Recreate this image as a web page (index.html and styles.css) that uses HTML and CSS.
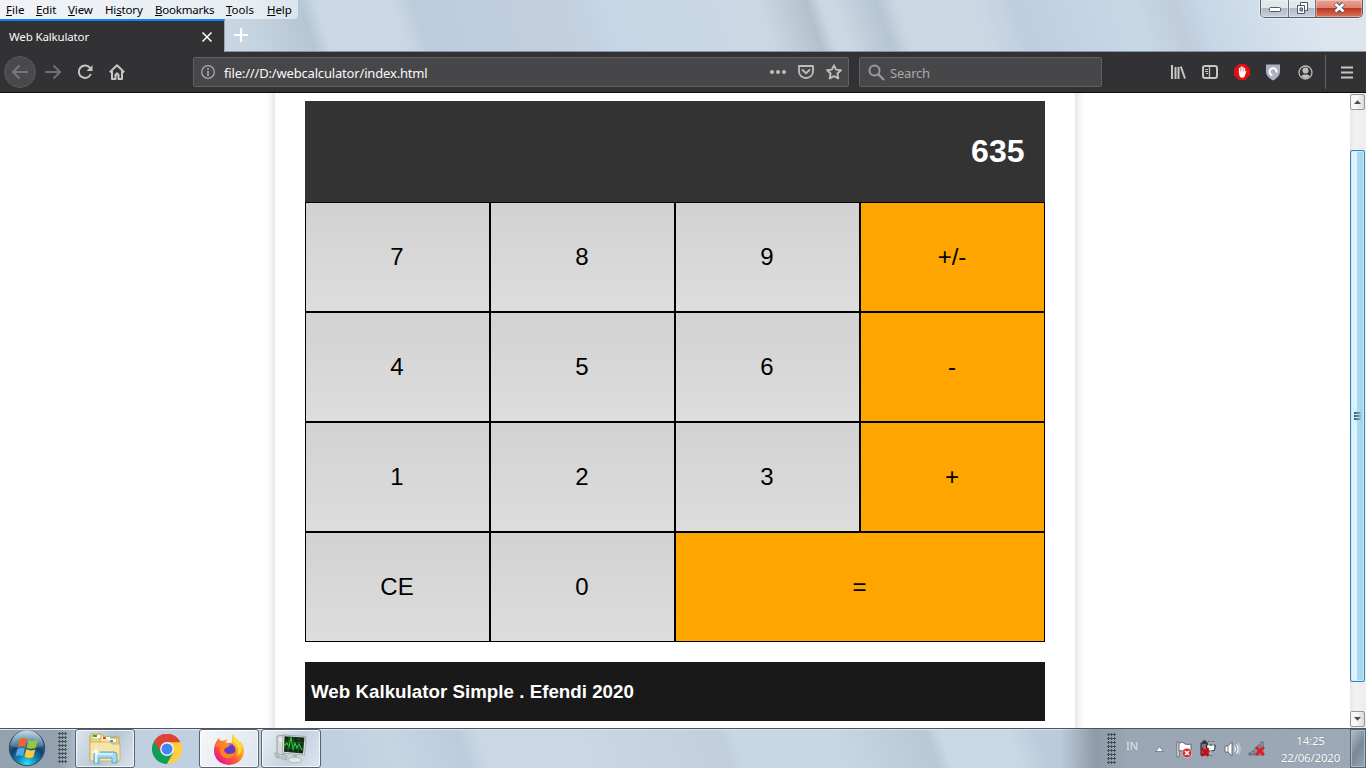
FILE: index.html
```html
<!DOCTYPE html>
<html lang="en">
<head>
<meta charset="utf-8">
<title>Web Kalkulator</title>
<link rel="stylesheet" href="styles.css">
</head>
<body>
<div class="desktop">
  <header class="titlebar">
    <nav class="menu">
      <span class="m-file"><u>F</u>ile</span><span class="m-edit"><u>E</u>dit</span><span class="m-view"><u>V</u>iew</span><span class="m-history">Hi<u>s</u>tory</span><span class="m-bookmarks"><u>B</u>ookmarks</span><span class="m-tools"><u>T</u>ools</span><span class="m-help"><u>H</u>elp</span>
    </nav>
    <div class="tabs">
      <div class="tab"><span>Web Kalkulator</span>
        <svg width="12" height="12" viewBox="0 0 12 12"><path d="M1.5 1.5l9 9M10.5 1.5l-9 9" stroke="#fff" stroke-width="1.5"/></svg>
      </div>
      <svg class="newtab" width="16" height="16" viewBox="0 0 16 16"><path d="M8 1v14M1 8h14" stroke="#fff" stroke-width="2"/></svg>
    </div>
    <div class="controls">
      <div class="ctl ctl-min"><svg width="14" height="8" viewBox="0 0 14 8"><rect x="1.5" y="1.5" width="11" height="4" rx="1" fill="#fff" stroke="#535666"/></svg></div>
      <div class="ctl ctl-max"><svg width="13" height="13" viewBox="0 0 13 13"><path d="M4.500.5h7v8h-7z" fill="#fff" stroke="#535666"/><path d="M1.500 3.500h7v8h-7z" fill="#fff" stroke="#535666"/><path d="M4 6h2.500v3H4z" fill="#aab6c5" stroke="#535666"/></svg></div>
      <div class="ctl ctl-close"><svg width="13" height="12" viewBox="0 0 13 12"><path d="M2.500 1.500l8 8.500M10.500 1.500l-8 8.500" stroke="#535666" stroke-width="4.400"/><path d="M2.500 2l8 7.500M10.500 2l-8 7.500" stroke="#fff" stroke-width="2.500"/></svg></div>
    </div>
  </header>

  <div class="toolbar">
    <div class="navs">
      <div class="nav back"><svg width="16" height="16" viewBox="0 0 16 16"><path d="M16 8H1.500M7.500 1.500L1 8l6.500 6.500" fill="none" stroke="#77777a" stroke-width="2"/></svg></div>
      <div class="nav"><svg width="16" height="16" viewBox="0 0 16 16"><path d="M0 8h14.500M8.500 1.500L15 8l-6.500 6.500" fill="none" stroke="#6f6f72" stroke-width="2"/></svg></div>
      <div class="nav"><svg width="16" height="16" viewBox="0 0 16 16"><path d="M13 4A6.200 6.200 0 1 0 13.800 10" fill="none" stroke="#c6c6c7" stroke-width="2"/><path d="M15.500 1v6H9.500z" fill="#c6c6c7"/></svg></div>
      <div class="nav"><svg width="16" height="16" viewBox="0 0 16 16"><path d="M.8 8.300L8 1.200l7.200 7.100M3 7v8h3.500v-4.500h3V15H13V7" fill="none" stroke="#c6c6c7" stroke-width="2" stroke-linejoin="round"/><path d="M7 8.500h2V11H7z" fill="#c6c6c7"/></svg></div>
    </div>
    <div class="field url">
      <svg width="14" height="14" viewBox="0 0 14 14"><circle cx="7" cy="7" r="6.300" fill="none" stroke="#aeaeaf" stroke-width="1.200"/><path d="M6.200 3h1.600v1.700H6.200zM6.200 6h1.600v5H6.200z" fill="#aeaeaf"/></svg>
      <span class="address">file:///D:/webcalculator/index.html</span>
      <svg class="dots" width="16" height="16" viewBox="0 0 16 16" fill="#bebebf"><circle cx="2" cy="8" r="2"/><circle cx="8" cy="8" r="2"/><circle cx="14" cy="8" r="2"/></svg>
      <svg class="pocket" width="16" height="16" viewBox="0 0 16 16"><path d="M1 2h14v5.500a7 6.500 0 0 1-14 0z" fill="none" stroke="#bebebf" stroke-width="1.800" stroke-linejoin="round"/><path d="M4.500 6L8 9.200 11.500 6" fill="none" stroke="#bebebf" stroke-width="1.900" stroke-linecap="round"/></svg>
      <svg class="star" width="16" height="16" viewBox="0 0 16 16"><path d="M8 1.300l2.100 4.300 4.800.6-3.500 3.300.9 4.900L8 12.100l-4.300 2.300.9-4.900L1.100 6.200l4.800-.6z" fill="none" stroke="#bebebf" stroke-width="1.900" stroke-linejoin="round"/></svg>
    </div>
    <div class="field search">
      <svg width="17" height="17" viewBox="0 0 17 17"><circle cx="6.500" cy="6.500" r="5" fill="none" stroke="#99999b" stroke-width="2"/><path d="M10 10l6 6" stroke="#99999b" stroke-width="2.400"/></svg>
      <span>Search</span>
    </div>
    <div class="tools">
      <svg class="t-lib" width="16" height="16" viewBox="0 0 16 16"><path d="M2 1v14M5.500 3v12M8.500 3v12M10.800 2.500l4.200 12" stroke="#c6c6c7" stroke-width="2"/></svg>
      <svg class="t-side" width="16" height="14" viewBox="0 0 16 14"><rect x="1" y="1" width="14" height="12" rx="2" fill="none" stroke="#c6c6c7" stroke-width="2"/><path d="M7.500 1v12" stroke="#c6c6c7" stroke-width="1.300"/><path d="M3 4.500h3M3 6.500h3M4 8.500h2" stroke="#c6c6c7"/></svg>
      <svg class="t-abp" width="16" height="16" viewBox="0 0 16 16"><path d="M4.700 0h6.600L16 4.700v6.600L11.300 16H4.700L0 11.300V4.700z" fill="#df1014"/><path d="M5.500 8.800V4.300M7.200 8V2.900M8.900 8V3.200M10.500 9V4.600" stroke="#fff" stroke-width="1.300" stroke-linecap="round"/><path d="M4.900 7.500h6.200l1.500-.8-1.800 5.300q-.8 1.900-2.500 1.700-2.200 0-2.900-1.900z" fill="#fff"/></svg>
      <svg class="t-shield" width="14" height="17" viewBox="0 0 14 17"><path d="M0 .5h14v7.200q0 5-7 8.800-7-3.800-7-8.800z" fill="#abb1bf"/><path d="M10.400 8.500a3.500 3.500 0 1 0-4 2.600" fill="none" stroke="#fff" stroke-width="2"/></svg>
      <svg class="t-user" width="15" height="15" viewBox="0 0 15 15"><circle cx="7.500" cy="7.500" r="6.500" fill="none" stroke="#bebebf" stroke-width="1.300"/><circle cx="7.500" cy="5.600" r="3" fill="#bebebf"/><path d="M3 11.300q2-2.600 4.500-1.600 2.500-1 4.500 1.600-4.500 4.200-9 0z" fill="#bebebf"/></svg>
      <i class="divider"></i>
      <svg class="t-menu" width="12" height="13" viewBox="0 0 12 13"><path d="M0 1.500h12M0 6.500h12M0 11.500h12" stroke="#c6c6c7" stroke-width="2"/></svg>
    </div>
  </div>

  <div class="viewport">
    <main class="page">
      <div class="card">
        <div class="display">635</div>
        <div class="keys">
          <div class="key">7</div><div class="key">8</div><div class="key">9</div><div class="key op">+/-</div>
          <div class="key">4</div><div class="key">5</div><div class="key">6</div><div class="key op">-</div>
          <div class="key">1</div><div class="key">2</div><div class="key">3</div><div class="key op">+</div>
          <div class="key">CE</div><div class="key">0</div><div class="key op equals">=</div>
        </div>
        <div class="credit">Web Kalkulator Simple . Efendi 2020</div>
      </div>
    </main>
    <aside class="scrollbar">
      <div class="arrow"><svg width="7" height="4" viewBox="0 0 7 4"><path d="M0 4L3.500.3 7 4z" fill="#4d4d4d"/></svg></div>
      <div class="thumb"><i></i><i></i><i></i></div>
      <div class="arrow"><svg width="7" height="4" viewBox="0 0 7 4"><path d="M0 0l3.500 3.700L7 0z" fill="#4d4d4d"/></svg></div>
    </aside>
  </div>

  <footer class="taskbar">
    <div class="start">
      <svg width="38" height="38" viewBox="0 0 38 38">
        <defs><radialGradient id="orb" cx=".5" cy=".95" r=".9"><stop offset="0" stop-color="#35e0fa"/><stop offset=".3" stop-color="#1288b8"/><stop offset=".6" stop-color="#123f68"/><stop offset="1" stop-color="#6e98b2"/></radialGradient>
        <linearGradient id="shine" x1="0" y1="0" x2="0" y2="1"><stop offset="0" stop-color="#e3f0f6" stop-opacity=".75"/><stop offset="1" stop-color="#8fb8cd" stop-opacity=".25"/></linearGradient></defs>
        <circle cx="19" cy="19" r="17.700" fill="url(#orb)" stroke="#294e69"/>
        <path d="M3 17a16 16 0 0 1 32 0q-16 6-32 0z" fill="url(#shine)"/>
        <path d="M11.500 10.500q3.500-2.500 7.500-.5l-1.800 8q-3.800-1.800-7.500.5z" fill="#ef6332"/>
        <path d="M20.500 11q4 2.300 9.500-.5l-2.200 8.200q-5 2.300-9-.2z" fill="#96c63e"/>
        <path d="M9.300 20q3.700-2.200 7.500-.5L15 27q-4-1.800-7.500.5z" fill="#55a9e2"/>
        <path d="M18.300 20.300q4 2.200 9 .2L25.300 28q-4.700 2-8.800-.3z" fill="#ffcb34"/>
      </svg>
    </div>
    <div class="grip"></div>
    <div class="task task-explorer">
      <svg width="34" height="32" viewBox="0 0 34 32">
        <path d="M2 3l2-2h10l2 3h15v23H2z" fill="#e9d28a" stroke="#bfa653"/><path d="M5 2h7v3H5z" fill="#fff"/><path d="M5 2h4v2H5z" fill="#16b52a"/>
        <path d="M12 5h16v5H12z" fill="#f3e2a4" stroke="#c5ac5e"/><path d="M14 4h8v2h-8z" fill="#fff"/><path d="M15 4h3v2h-3z" fill="#e3492c"/><path d="M21 6h7v3h-7z" fill="#fff"/><path d="M22 7h3v2h-3z" fill="#2d96dc"/>
        <path d="M2 9h20l2 2h8v17H2z" fill="#f5e5a6" stroke="#d0b668"/>
        <path d="M6 30v-8q0-3 3-3h17q3 0 3 3v8h-5v-5H11v5z" fill="#a4d8ef" stroke="#5ba3c5"/><path d="M8 30v-7q0-2 2-2h15" fill="none" stroke="#e5f8ff" stroke-width="1.500"/><path d="M8 14l1 4 4 1-4 1-1 4-1-4-4-1 4-1z" fill="#fff"/>
      </svg>
    </div>
    <div class="task task-chrome">
      <svg width="30" height="30" viewBox="0 0 30 30"><path d="M15 15L2 7.500A15 15 0 0 1 28 7.500z" fill="#db4437"/><path d="M2 7.500A15 15 0 0 0 15 30l6.500-11.300L15 15z" fill="#0f9d58"/><path d="M28 7.500A15 15 0 0 1 15 30l6.500-11.300L15 7.500z" fill="#ffcd40"/><path d="M15 8.200L8.900 18.400 2 7.500A15 15 0 0 1 28 7.500V8.200z" fill="#db4437"/><circle cx="15" cy="15" r="6.900" fill="#f4f4f4"/><circle cx="15" cy="15" r="5.500" fill="#4285f4"/></svg>
    </div>
    <div class="task active task-firefox">
      <svg width="32" height="32" viewBox="0 0 32 32">
        <defs><linearGradient id="fox" x1=".9" y1=".1" x2=".2" y2=".9"><stop offset="0" stop-color="#fff044"/><stop offset=".35" stop-color="#ffa621"/><stop offset=".65" stop-color="#ff5a3c"/><stop offset="1" stop-color="#e81881"/></linearGradient></defs>
        <path d="M20 1q1.500 3.500 4.500 6l1.500 2.500.8-1.500Q31 12 31 18A15 14 0 0 1 1 18Q1 11 4.500 7l.5-2 3 3 3-.5 3.500-1.500-2 4q7-1 7 0-1.500-5 .5-9z" fill="url(#fox)"/>
        <circle cx="16.500" cy="17" r="6" fill="#5d3dc4"/>
        <path d="M11.500 13q4-4 9-1.500-3 0-4 1.500z" fill="#9659e8"/>
        <path d="M2 13q3-5 9-3.500l6 2q0 2-3 3-3 1-3 3 2 4 6 3.500 3-.5 5-2-2 6-8 6-6-.5-7-7-.5-2 .5-4-3-1-5.500-1z" fill="#ff8428"/>
        <path d="M20 1q-2 6 3 11 4 5 1 11 5-3 4.500-9-1-4-4-7-3.500-2-4.500-6z" fill="#ffdc3d"/>
      </svg>
    </div>
    <div class="task active task-monitor">
      <svg width="34" height="30" viewBox="0 0 34 30">
        <path d="M3 2l9-1v18l-9 5z" fill="#d3d7d7" stroke="#747b7b" stroke-width=".6"/><path d="M5 5h5M5 7h5" stroke="#fff"/><path d="M9 1l23 1.500-1.500 18.500-22-2z" fill="#e5e5df" stroke="#848984" stroke-width=".6"/><path d="M10.500 2.300l20 1.200-1.500 16-19-1.800z" fill="#142b18"/><path d="M10 12l3-3 2 4 2-10 2 13 2-7 2 5 2-4 3 6" fill="none" stroke="#22d433" stroke-width="1.200"/><path d="M15 3l-1 15M20 3l-1 15M25 4l-1 15M10 8l20 1M10 14l19 1" stroke="#267536" stroke-width=".6"/><path d="M19 20h4v5h-4z" fill="#adb2b5"/><ellipse cx="21" cy="26" rx="7" ry="2.800" fill="#e4e5e6" stroke="#989fa6" stroke-width=".6"/><path d="M1 19l12 3-1 4-11-4z" fill="#d0d5d5" stroke="#858f91" stroke-width=".6"/><path d="M3 21l9 3" stroke="#909999" stroke-dasharray="1"/>
      </svg>
    </div>
    <div class="tray">
      <div class="grip"></div>
      <span class="lang">IN</span>
      <svg class="up" width="9" height="6" viewBox="0 0 9 6"><path d="M.5 5.500L4.500.8l4 4.700z" fill="#fff" stroke="#59636e" stroke-width=".7"/></svg>
      <svg class="flag" width="17" height="18" viewBox="0 0 17 18"><path d="M1 1h2v15H1z" fill="#fff" stroke="#4d5259" stroke-width=".7"/><path d="M3 2q4-2 6 1 3 1 6 0v8q-4 1-6-1-2-1-6 0z" fill="#fff" stroke="#4d5259" stroke-width=".8"/><circle cx="11" cy="12" r="4.800" fill="#d42d2f" stroke="#fff" stroke-width=".5"/><path d="M9 10l4 4M13 10l-4 4" stroke="#fff" stroke-width="1.600"/></svg>
      <svg class="plug" width="17" height="18" viewBox="0 0 17 18"><path d="M1 3h7v12H1zM3 1h3v2H3z" fill="#73787d" stroke="#222"/><path d="M9 1v4M13 1v4M6.500 5h8.500v3q0 3-3 3H9.500Q6.500 11 6.500 8zM11 11v5" fill="#fff" stroke="#222"/><path d="M9 2v4M13 2v4M11 11v4" stroke="#fff"/><path d="M1.500 8l7 8M8.500 8l-7 8" stroke="#e0000b" stroke-width="2.600"/></svg>
      <svg class="speaker" width="17" height="16" viewBox="0 0 17 16"><path d="M1 5h3l4-4v14l-4-4H1z" fill="#fff" stroke="#515b66" stroke-width=".8"/><path d="M4 5v6" stroke="#798490"/><path d="M10.500 5.500q2 2.500 0 5M12.500 3.500q3.500 4.500 0 9" fill="none" stroke="#fff" stroke-width="1.100"/><path d="M14.500 2q3.500 6 0 12" fill="none" stroke="#d3dae1" stroke-width=".8"/></svg>
      <svg class="network" width="17" height="16" viewBox="0 0 17 16"><path d="M1 12h2v2H1zM4 10h2v4H4zM7 7h2v7H7zM10 4h2v10h-2zM13 1h2v13h-2z" fill="#aeb6bf" stroke="#4b555f" stroke-width=".8"/><path d="M8 6l8 8M16 6l-8 8" stroke="#e51a20" stroke-width="2.500"/></svg>
      <div class="clock"><span>14:25</span><span>22/06/2020</span></div>
      <div class="peek"></div>
    </div>
  </footer>
</div>
</body>
</html>
```
FILE: styles.css
```css
* { box-sizing: border-box; }
body { margin: 0; overflow: hidden; background: #fff; }
svg { display: block; flex: none; }
.desktop { width: 1366px; height: 768px; display: grid; grid-template-rows: 52px 41px 635px 40px; font-family: "Noto Sans", sans-serif; }
.titlebar { display: grid; grid-template-columns: 1fr 106px; grid-template-rows: 19px 33px; box-shadow: inset 0 -1px #8593a0; background: linear-gradient(72deg, #c8d6e4 0 18%, #b6c6d3 22.800%, #cad8e5 24% 29.500%, #bdccdc 31%, #c2d0e0 42.500%, #c5d6e6 44.500%, #cbd8e4 55% 56%, #b3c1cd 59.500%, #cbd8e4 60.500% 61.500%, #b6c5d2 64.500%, #cbd8e4 66% 71.500%, #bfcedf 74.500%, #c7d8e7 83%, #bfccdc 86%, #c6d7e7 88%, #dce5ee 96%); }
.menu { width: 298px; height: 19px; padding-left: 6px; display: flex; align-items: center; border-radius: 0 0 4px; background: linear-gradient(90deg, #f1f3f6, #e6edf3 85%, #dae4ed); color: #000; font-size: 11.500px; line-height: 18px; white-space: nowrap; }
.menu u { text-underline-offset: 1px; text-decoration-thickness: 1px; }
.m-file { width: 30px; }
.m-edit { width: 32px; letter-spacing: -.1px; }
.m-view { width: 37px; letter-spacing: -.1px; }
.m-history { width: 50px; letter-spacing: -.15px; }
.m-bookmarks { width: 71px; letter-spacing: -.2px; }
.m-tools { width: 41px; }
.m-help { letter-spacing: -.1px; }
.tabs { grid-column: 1; grid-row: 2; display: flex; }
.tab { width: 225px; height: 33px; padding: 0 12px 0 9px; display: flex; align-items: center; justify-content: space-between; background: #323234; border-top: 2px solid #0a84ff; border-right: 1px solid #98a6b3; color: #f9f9fa; font-size: 11.500px; letter-spacing: -.15px; }
.tab svg { margin: 1px -1px 0 0; }
.newtab { margin: 8px 0 0 8px; }
.controls { grid-column: 2; grid-row: 1; width: 103px; height: 18px; display: flex; border: 1px solid #525d68; border-top: 0; border-radius: 0 0 5px 5px; box-shadow: 0 0 0 1px #e8eff5; overflow: hidden; }
.ctl { display: flex; align-items: center; justify-content: center; box-shadow: inset 0 0 0 1px rgba(255,255,255,.35); background: linear-gradient(#e1e7eb 0 45%, #b1bac4 50%, #c9d2dc); }
.ctl-min { width: 28px; border-right: 1px solid #687581; padding-top: 3px; }
.ctl-max { width: 27px; border-right: 1px solid #687581; padding-bottom: 1px; }
.ctl-close { width: 46px; padding-bottom: 1px; background: linear-gradient(#eaa294, #dc8373 45%, #bd3724 50%, #da735a); }
.toolbar { display: flex; align-items: center; background: #323234; border-bottom: 1px solid #0c0c0d; }
.navs { width: 189px; margin-left: 4px; display: flex; flex: none; }
.nav { width: 32px; height: 32px; display: grid; place-items: center; }
.nav.back { margin-right: 1px; border: 1px solid #575759; border-radius: 50%; background: #4a4a4c; }
.field { height: 30px; display: flex; align-items: center; flex: none; background: #474749; border: 1px solid #5f5f61; border-radius: 2px; color: #f9f9fa; font-size: 13px; }
.url { width: 656px; padding-left: 7px; }
.address { flex: 1; margin-left: 9px; padding-top: 1px; letter-spacing: -.17px; }
.pocket, .star { margin-left: 12px; }
.star { margin-right: 6px; }
.search { width: 243px; margin-left: 10px; padding-left: 8px; color: #a9a9aa; }
.search span { margin-left: 5px; padding-top: 1px; letter-spacing: -.2px; }
.tools { margin-left: 68px; display: flex; align-items: center; }
.t-side { margin-left: 16px; }
.t-abp { margin-left: 16px; }
.t-shield { margin-left: 16px; }
.t-user { margin-left: 18px; }
.divider { width: 1px; height: 34px; margin-left: 12px; background: #606062; }
.t-menu { margin-left: 15px; }
.viewport { min-height: 0; display: grid; grid-template-columns: 1350px 16px; overflow: hidden; }
.page { padding-left: 275px; overflow: hidden; }
.card { width: 800px; height: 700px; margin-top: -40px; padding: 48px 30px 0; background: #fff; box-shadow: 0 0 10px rgba(0,0,0,.2); font-family: "Liberation Sans", Arial, sans-serif; }
.display { height: 101px; padding-right: 20.500px; display: flex; align-items: center; justify-content: flex-end; background: #333; color: #fff; font-size: 32px; font-weight: 700; }
.keys { height: 440px; display: grid; grid-template-columns: repeat(4, 185px); grid-template-rows: repeat(4, 110px); }
.key { display: flex; align-items: center; justify-content: center; border: 1px solid #000; background: linear-gradient(#d2d2d2, #ddd); font-size: 24px; color: #000; padding-right: 1px; }
.equals { grid-column: span 2; }
.key.op { background: #ffa500; }
.credit { height: 59px; margin-top: 20px; padding-left: 6px; display: flex; align-items: center; background: #191919; color: #fff; font-size: 18.720px; font-weight: 700; letter-spacing: .03px; }
.scrollbar { display: flex; flex-direction: column; align-items: center; background: linear-gradient(90deg, #e7e7e7, #f2f2f2 30%, #ededed); }
.arrow { width: 15px; height: 16px; margin: 1px 1px 0 0; display: grid; place-items: center; border: 1px solid #999; border-radius: 2px; background: linear-gradient(90deg, #f7f7f7 45%, #d8d8da); }
.thumb { width: 15px; height: 532px; margin: 40px 1px 28px 0; display: flex; flex-direction: column; align-items: center; justify-content: center; gap: 1px; border: 1px solid #3c7fb1; border-radius: 2px; box-shadow: inset 0 0 0 1px #c9ecfc; background: linear-gradient(90deg, #dff3fd 45%, #a9daf3 50%, #a5d6f0); }
.thumb i { width: 7px; height: 2px; background: linear-gradient(90deg, #245b7c, #83bad5); }
.taskbar { display: flex; align-items: stretch; border-top: 1px solid #485460; box-shadow: inset 0 1px #dce7f0; background: linear-gradient(90deg, #94a1ae 0 60px, #acbac9 76px, transparent 120px), linear-gradient(70deg, #c0d0e0 0 25%, #c5d5e4 29%, #bdccdd 34%, #cad8e5 35.500% 43%, #c0cede 53%, #c7d7e6 54% 61%, #b8c8d7 68%, #c9d8e5 69% 74%, #bccbdc 76%, #bdccdc 100%); }
.start { width: 57px; display: flex; padding-left: 8px; }
.grip { width: 9px; height: 31px; flex: none; background: radial-gradient(circle at 1.500px 1.500px, #485058 0 1px, transparent 1.200px) 0 0 / 3px 4px; }
.start + .grip { margin: 3px 8px 0 1px; }
.task { width: 60px; height: 39px; display: flex; align-items: center; justify-content: center; }
.task-explorer, .active { border: 1px solid #58646f; border-radius: 3px; box-shadow: inset 0 0 0 1px rgba(255,255,255,.75); background: linear-gradient(120deg, #dfe6ed, #b7c5d2 52%, #dae4ed); }
.task-chrome { width: 64px; }
.active { background: linear-gradient(120deg, #f5f7f9, #dce5ed); }
.task-monitor { margin-left: 2px; background: linear-gradient(120deg, #e9eef3, #c4d1df 55%, #dce6ef); }
.tray { width: 306px; margin-left: auto; padding-left: 47px; display: flex; align-items: center; flex: none; background: linear-gradient(90deg, transparent, #8e9ba8 35px, #9aa6b3 70px, #9ca8b5); color: #fff; }
.lang { width: 28px; flex: none; margin: -7px 0 0 10px; color: #e1e4e7; font-size: 11px; }
.up { margin: 1px 0 0 1px; }
.flag { margin: 2px 0 0 12px; }
.plug { margin: 1px 0 0 7px; }
.speaker { margin: 1px 0 0 7px; }
.network { margin: 1px 0 0 7px; }
.clock { width: 79px; margin-left: 6px; display: flex; flex: none; flex-direction: column; align-items: center; font-size: 11.500px; line-height: 17px; letter-spacing: -.2px; text-shadow: 0 0 1px #66717b; }
.clock span { white-space: nowrap; }
.peek { width: 16px; height: 39px; margin-left: auto; flex: none; border: 1px solid #596672; box-shadow: inset 0 0 0 1px #aeb9c3; background: linear-gradient(125deg, #b2bdc8, #7b8996 50%, #96a5b3); }
```
